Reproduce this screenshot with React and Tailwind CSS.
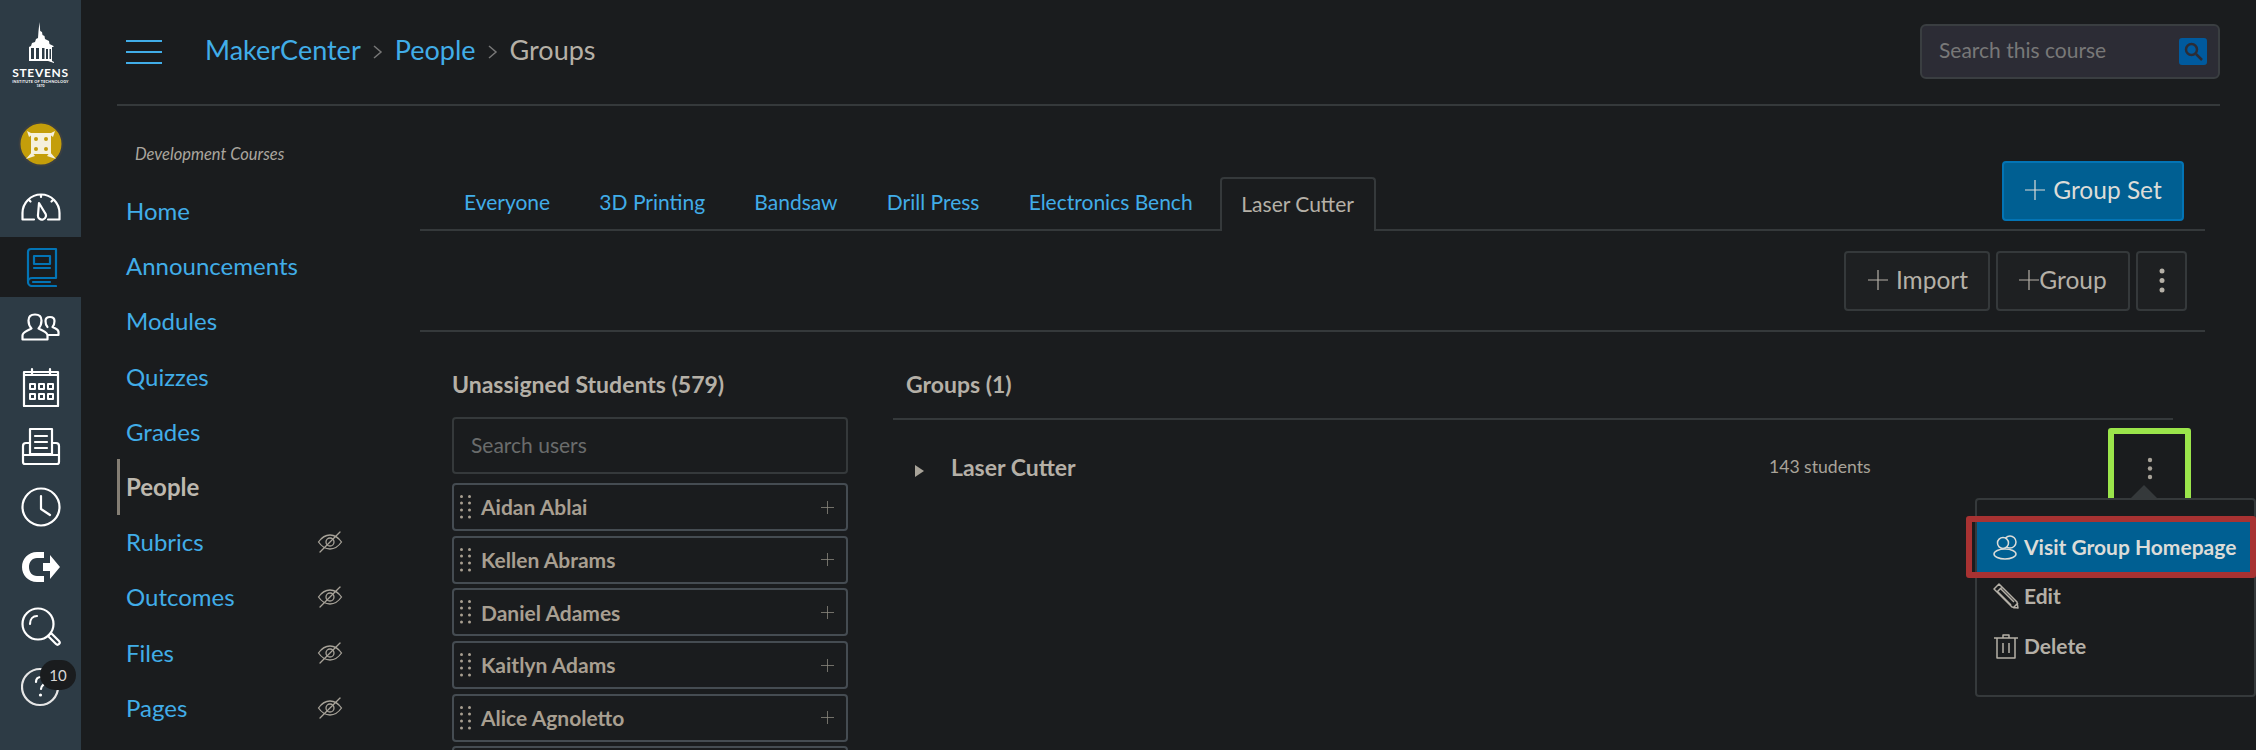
import React from "react";

const Ic = ({ children, w = 40, h = 40, vb, className = "", sw = 2.2 }) => (
  <svg width={w} height={h} viewBox={vb || `0 0 ${w} ${h}`} fill="none" stroke="currentColor" strokeWidth={sw} strokeLinecap="round" strokeLinejoin="round" className={className}>
    {children}
  </svg>
);

const Plus = ({ s = 20, className = "" }) => (
  <svg width={s} height={s} viewBox="0 0 20 20" stroke="currentColor" strokeWidth="1.2" className={className}>
    <path d="M10 0V20M0 10H20" />
  </svg>
);

const Logo = () => (
  <div className="h-[117px] w-full flex flex-col items-center pt-[22px] text-white">
    <svg width="26" height="42" viewBox="0 0 26 42" fill="white">
      <path d="M11.500 0l.7 9 1.800 1 .5 3 2 1 .5 3 4 2 .5 3 4 2v1h-1.500v14l2 1v1l-6-2H1V25l2-1 1-3 3-1 1-3 2-1 .5-7z" />
      <path d="M3 26h3v11H3zM8 26h3v11H8zM14 26h2.500v11H14zM18 27h2v10h-2zM21.500 27h1.500v10h-1.500z" fill="#2d3b45" />
    </svg>
    <div className="text-[12px] leading-[11px] font-bold tracking-[0.7px] mt-[3px] font-['Lato']">STEVENS</div>
    <div className="text-[3.800px] leading-[5px] whitespace-nowrap tracking-[0.2px] font-bold mt-[1px] font-['Lato']">INSTITUTE OF TECHNOLOGY</div>
    <div className="text-[3.400px] leading-[5px] font-bold font-['Lato']">1870</div>
  </div>
);

const Avatar = () => (
  <div className="h-[60px] w-full flex items-start justify-center pt-[4px]">
    <svg width="46" height="46" viewBox="0 0 46 46">
      <circle cx="23" cy="23" r="21.500" fill="#c49e0a" stroke="#3a3f42" strokeWidth="2" />
      <rect x="13" y="12" width="20" height="21" fill="#f5f0dc" />
      <path d="M8 38l6-7 3 4zM38 38l-6-7-3 4zM9 10l6 3-4 3zM37 10l-6 3 4 3z" fill="#f5f0dc" />
      <g fill="#c49e0a"><circle cx="18" cy="18" r="2" /><circle cx="28" cy="18" r="2" /><circle cx="18" cy="28" r="2" /><circle cx="28" cy="28" r="2" /></g>
    </svg>
  </div>
);

const navIcons = [
  <Ic key="d" h={28} vb="0 0 40 28">
    <path d="M2 26.500h11M27 26.500h11.500V20a18.500 18.500 0 0 0-37 0v6.500h1" />
    <path d="M17 9l6 10a4 4 0 1 1-7 2z" transform="translate(1 1)" />
    <path d="M20 2v2M8 7l1.500 1.500M32 7l-1.500 1.500" />
  </Ic>,
  <Ic key="c" sw={2.2}>
    <path d="M7 34V5a3 3 0 0 1 3-3h25v29H11a4 4 0 0 0-4 4 4 4 0 0 0 4 4h24" />
    <rect x="13" y="9" width="16" height="8" />
    <path d="M13 21h16M12 35h17" />
  </Ic>,
  <Ic key="p" h={28} vb="0 0 40 28">
    <path d="M1.500 26.500v-4c0-2.500 2-3.500 5-5l4-2c-2-2-3-4.500-3-8C7.500 3.500 10 1.500 14 1.500s6.500 2 6.500 6c0 3.500-1 6-3 8l4 2c3 1.500 5 2.500 5 5v4z" />
    <path d="M26.500 14c-1-1-2-3-2-6 0-2.500 2-4 4.500-4s4.500 1.500 4.500 4c0 3-1 5-2 6l3 1.500c2 1 3 1.500 3 3.500v3h-10" />
  </Ic>,
  <Ic key="cal">
    <path d="M3 8h34v31H3zM3 8V5h34v3M11 2v6M29 2v6" />
    <g strokeWidth="2"><rect x="9" y="17" width="5" height="5" /><rect x="18" y="17" width="5" height="5" /><rect x="27" y="17" width="5" height="5" /><rect x="9" y="27" width="5" height="5" /><rect x="18" y="27" width="5" height="5" /><rect x="27" y="27" width="5" height="5" /></g>
  </Ic>,
  <Ic key="in">
    <path d="M9 27V2h22v25z" />
    <path d="M14 9h12M14 15h12M14 21h12" />
    <path d="M9 16H5a3 3 0 0 0-3 3v16a2 2 0 0 0 2 2h32a2 2 0 0 0 2-2V19a3 3 0 0 0-3-3h-4M2 28h36" />
  </Ic>,
  <Ic key="h">
    <circle cx="20" cy="20" r="18.500" />
    <path d="M20 9v13l9 6" />
  </Ic>,
  <svg key="co" width="40" height="40" viewBox="0 0 40 40" fill="white">
    <path d="M23 5v6h-7c-5 0-8 4-8 9s3 9 8 9h7v6h-7C7 35 1 28 1 20S7 5 16 5z" />
    <path d="M22 16h7V8l10 12-10 12v-8h-7z" />
  </svg>,
  <Ic key="s">
    <circle cx="17" cy="17" r="15.500" />
    <path d="M9 17c0-5 3-8 7-8M27 29l3-3 8 8a2 2 0 0 1-3 3z" />
  </Ic>,
  <Ic key="q">
    <circle cx="19" cy="20" r="18" stroke="#e6e6e6" />
    <path d="M15 15c0-3 2-5 5-5s4 2 4 5c0 3-4 3-4 7" />
    <circle cx="19.500" cy="28" r="1.600" fill="white" stroke="none" />
  </Ic>,
];

const Sidebar = () => (
  <aside className="w-[81px] h-[750px] shrink-0 bg-[#2d3b45] flex flex-col text-white">
    <Logo />
    <Avatar />
    {navIcons.map((ic, i) => (
      <div key={i} className={`relative h-[60px] w-full shrink-0 flex items-center justify-center ${i === 1 ? "bg-[#1a1c1e] text-[#0374b5]" : ""}`}>
        {ic}
        {i === 8 && (
          <span className="absolute left-[40px] top-[3px] w-[36px] h-[30px] rounded-full bg-[#1a1c1e] text-[#d8d8d8] text-[15px] flex items-center justify-center">10</span>
        )}
      </div>
    ))}
  </aside>
);

const EyeOff = () => (
  <svg width="26" height="22" viewBox="0 0 26 22" fill="none" stroke="#a8a399" strokeWidth="1.300" strokeLinecap="round">
    <path d="M1.500 11C5 6 9 4 13 4s8 2 11.500 7C21 16 17 18 13 18S5 16 1.500 11z" />
    <circle cx="13" cy="11" r="4" />
    <path d="M3 21L23 1" />
  </svg>
);

const courseNav = [
  ["Home"], ["Announcements"], ["Modules"], ["Quizzes"], ["Grades"], ["People", false, true],
  ["Rubrics", true], ["Outcomes", true], ["Files", true], ["Pages", true],
];

const CourseNav = () => (
  <nav className="w-[303px] shrink-0 pt-[35px]">
    <div className="pl-[18px] h-[27px] text-[16.500px] italic text-[#aaa69e] leading-[27px]">Development Courses</div>
    <ul className="mt-[15.500px]">
      {courseNav.map(([t, hid, act]) => (
        <li key={t} className={`h-[55.200px] flex items-center pr-[77px] justify-between text-[24px] ${act ? "border-l-[3px] border-[#847e74] pl-[6px] font-bold text-[#bdb8ae]" : "pl-[9px] text-[#41ade8]"}`}>
          <span>{t}</span>
          {hid && <EyeOff />}
        </li>
      ))}
    </ul>
  </nav>
);

const tabs = ["Everyone", "3D Printing", "Bandsaw", "Drill Press", "Electronics Bench"];

const Btn = ({ children, className = "" }) => (
  <div className={`h-[60px] rounded-[4px] border-2 border-[#35393b] bg-[#1e2022] flex items-center justify-center text-[#b5b0a7] text-[24.500px] pb-[2px] ${className}`}>{children}</div>
);

const Kebab = ({ color, r = 2.500, gap = 9 }) => (
  <svg width="8" height={2 * gap + 8} viewBox={`0 0 8 ${2 * gap + 8}`} fill={color}>
    <circle cx="4" cy="4" r={r} /><circle cx="4" cy={4 + gap} r={r} /><circle cx="4" cy={4 + 2 * gap} r={r} />
  </svg>
);

const Grip = () => (
  <svg width="11" height="24" viewBox="0 0 11 24" fill="#a89f91">
    {[1.500, 8, 15, 22].map((y) => (
      <g key={y}><circle cx="1.500" cy={y} r="1.500" /><circle cx="9.500" cy={y} r="1.500" /></g>
    ))}
  </svg>
);

const students = ["Aidan Ablai", "Kellen Abrams", "Daniel Adames", "Kaitlyn Adams", "Alice Agnoletto"];

const Unassigned = () => (
  <section className="w-[396px] ml-[32px] shrink-0">
    <h3 className="text-[23px] font-bold text-[#b5b0a7] h-[28px] leading-[28px]">Unassigned Students (579)</h3>
    <div className="mt-[19px] h-[57px] pb-[1px] rounded-[4px] border-2 border-[#35393b] flex items-center pl-[17px] text-[21px] text-[#6a6c6c]">Search users</div>
    <ul className="mt-[9px] flex flex-col gap-[4.700px]">
      {students.map((s) => (
        <li key={s} className="h-[48px] rounded-[4px] border-2 border-[#454c52] flex items-center pl-[6px] pr-[12px] text-[#a89f91]">
          <Grip />
          <span className="ml-[10px] text-[21px] font-bold flex-1">{s}</span>
          <Plus s={13} className="text-[#8d887f]" />
        </li>
      ))}
      <li className="h-[48px] rounded-[4px] border-2 border-[#454c52]" />
    </ul>
  </section>
);

const Groups = () => (
  <section className="relative ml-[45px] w-[1280px] shrink-0">
    <h3 className="text-[23px] font-bold text-[#b5b0a7] h-[28px] leading-[28px] pl-[13px]">Groups (1)</h3>
    <div className="mt-[20px] border-t-2 border-[#35393b]" />
    <div className="mt-[29px] h-[36px] flex items-center">
      <svg width="9" height="12" viewBox="0 0 9 12" fill="#a8a399" className="ml-[22px] mt-[8px]"><path d="M0 0l9 6-9 6z" /></svg>
      <span className="ml-[27px] text-[23px] font-bold text-[#b5b0a7]">Laser Cutter</span>
      <span className="absolute left-[876px] text-[17.600px] text-[#a8a399]">143 students</span>
    </div>
  </section>
);

const Popover = () => (
  <>
    <div className="absolute left-[2108px] top-[428px] w-[83px] h-[76px] border-[6px] border-[#9be54b] rounded-[3px] flex justify-center pt-[22px]">
      <Kebab color="#a8a399" r={2.200} gap={8.500} />
    </div>
    <div className="absolute left-[1975px] top-[498px] w-[281px] h-[199px] border-2 border-[#35393b] rounded-[4px] bg-[#1a1c1e]">
      <div className="mt-[22px] h-[50px] bg-[#005f92] flex items-center pl-[16px] text-[21px] font-bold text-[#dcdcd8] gap-[5px] whitespace-nowrap">
        <svg width="26" height="26" viewBox="0 0 26 26" fill="none" stroke="currentColor" strokeWidth="1.500">
          <circle cx="17" cy="8" r="6" /><circle cx="10" cy="9" r="5.500" fill="#005f92" /><ellipse cx="12" cy="20" rx="11" ry="5" fill="#005f92" />
        </svg>
        Visit Group Homepage
      </div>
      <div className="h-[48px] flex items-center pl-[16px] text-[21px] font-bold text-[#b5b0a7] gap-[5px]">
        <svg width="26" height="26" viewBox="0 0 26 26" fill="none" stroke="currentColor" strokeWidth="1.500" strokeLinejoin="round">
          <path d="M1 6l5-5 18 18 1 6-6-1zM4 9l5-5M20 25l5-5M8 6l13 13M5 9l13 13" />
        </svg>
        Edit
      </div>
      <div className="mt-[2px] h-[48px] flex items-center pl-[16px] text-[21px] font-bold text-[#b5b0a7] gap-[5px]">
        <svg width="26" height="26" viewBox="0 0 26 26" fill="none" stroke="currentColor" strokeWidth="1.500" strokeLinejoin="round">
          <path d="M1 5h24M10 5V2h6v3M4 5v20h18V5M10 10v10M16 10v10" />
        </svg>
        Delete
      </div>
    </div>
    <svg width="28" height="14" viewBox="0 0 28 14" fill="#35393b" className="absolute left-[2130px] top-[485px]"><path d="M14 0l14 14H0z" /></svg>
    <div className="absolute left-[1966px] top-[516px] w-[290px] h-[62px] border-[6px] border-[#a83232] rounded-[3px]" />
  </>
);

export default function App() {
  return (
    <div className="relative w-[2256px] h-[750px] overflow-hidden flex bg-[#1a1c1e] font-['Lato',sans-serif]">
      <Sidebar />
      <div className="w-[2139px] ml-[36px] shrink-0 flex flex-col">
        <header className="h-[106px] w-[2103px] shrink-0 border-b-2 border-[#35393b] flex items-center">
          <svg width="36" height="26" viewBox="0 0 36 26" stroke="#41ade8" strokeWidth="2" className="ml-[9px] mr-[43px]"><path d="M0 2H36M0 13H36M0 24H36" /></svg>
          <div className="flex items-center text-[27px] -mt-[3px]">
            <span className="text-[#41ade8]">MakerCenter</span>
            <svg width="10" height="14" viewBox="0 0 10 14" fill="none" stroke="#777" strokeWidth="1.500" className="mx-[12px] mt-[3px]"><path d="M1 1l7 6-7 6" /></svg>
            <span className="text-[#41ade8]">People</span>
            <svg width="10" height="14" viewBox="0 0 10 14" fill="none" stroke="#777" strokeWidth="1.500" className="mx-[12px] mt-[3px]"><path d="M1 1l7 6-7 6" /></svg>
            <span className="text-[#b5b0a7]">Groups</span>
          </div>
          <div className="ml-auto w-[300px] h-[55px] rounded-[6px] border-2 border-[#3a3e41] bg-[#2c2c35] flex items-center pl-[17px] pr-[11px] text-[21px] text-[#787878] mb-[2px]">
            <span className="flex-1 -mt-[2px]">Search this course</span>
            <div className="w-[28px] h-[27px] rounded-[3px] bg-[#005a9e] flex items-center justify-center">
              <svg width="20" height="20" viewBox="0 0 20 20" fill="none" stroke="#2c2c35" strokeWidth="2.500"><circle cx="8.500" cy="8.500" r="5.500" /><path d="M13 13l6 6" /></svg>
            </div>
          </div>
        </header>
        <div className="flex min-h-0 flex-1">
          <CourseNav />
          <main className="w-[1786px] shrink-0">
            <div className="relative w-[1785px] h-[125px] flex items-end border-b-2 border-[#35393b]">
              <div className="flex items-end mb-[-2px] text-[21px] pl-[44px]">
                <div className="flex gap-[49.200px] pb-[3px]">
                  {tabs.map((t) => (
                    <span key={t} className="h-[53px] flex items-center text-[#41ade8]">{t}</span>
                  ))}
                </div>
                <span className="ml-[27px] h-[54px] w-[156px] pb-[3px] flex items-center justify-center rounded-t-[4px] border-2 border-b-0 border-[#35393b] bg-[#1a1c1e] text-[#b5b0a7]">Laser Cutter</span>
              </div>
              <div className="absolute left-[1582px] top-[55px] w-[182px] h-[60px] pb-[2px] pl-[1px] rounded-[4px] border-2 border-[#0374b5] bg-[#005f92] flex items-center justify-center gap-[8px] text-[24.500px] text-[#dcdcd8]">
                <Plus s={20} />Group Set
              </div>
            </div>
            <div className="w-[1785px] h-[101px] flex items-start justify-end gap-[6px] pr-[18px] pt-[20px] border-b-2 border-[#35393b]">
              <Btn className="w-[146px] gap-[8px] pl-[2px]"><Plus s={20} />Import</Btn>
              <Btn className="w-[134px]"><Plus s={20} />Group</Btn>
              <Btn className="w-[51px]"><Kebab color="#b5b0a7" r={2.500} gap={9.500} /></Btn>
            </div>
            <div className="flex pt-[38px]">
              <Unassigned />
              <Groups />
            </div>
          </main>
        </div>
      </div>
      <Popover />
    </div>
  );
}
